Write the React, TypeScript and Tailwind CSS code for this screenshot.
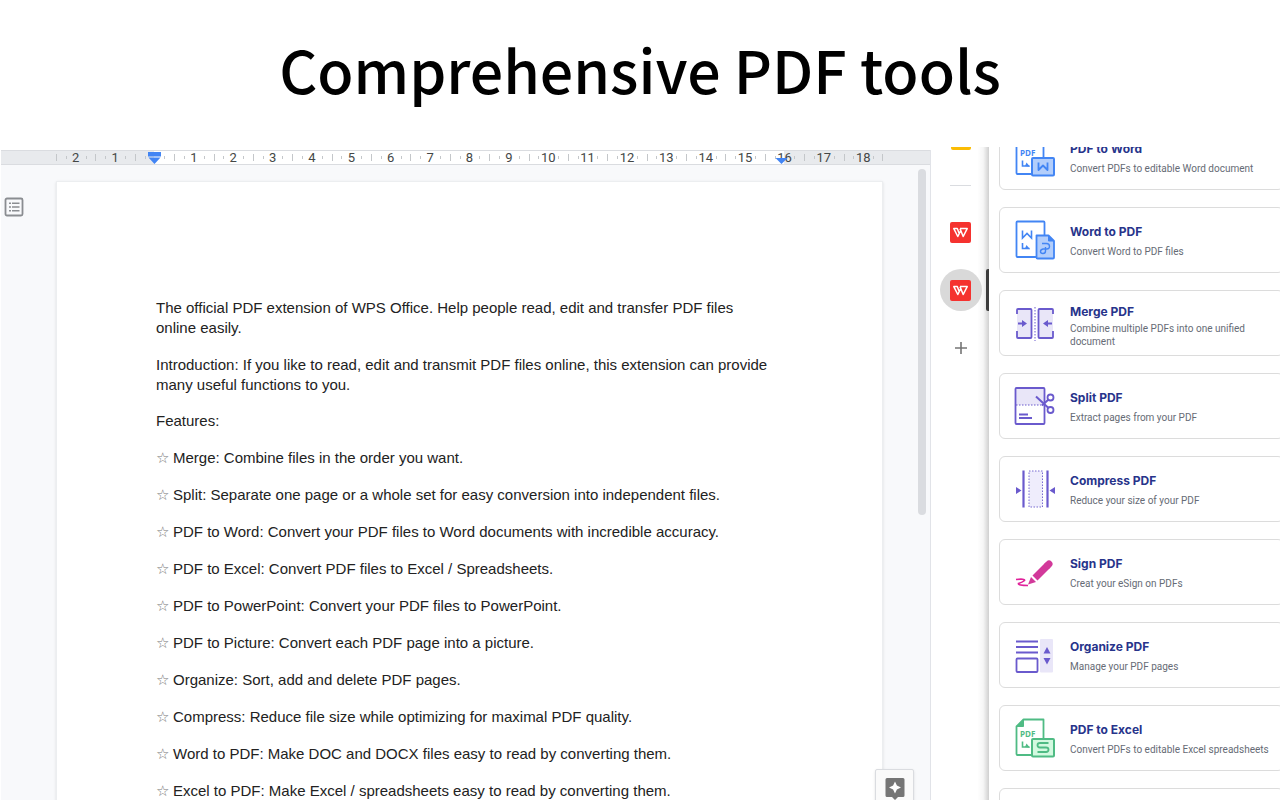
import type { ReactNode } from "react";

interface Tool {
  title: string;
  description: string;
  icon: ReactNode;
  twoLines?: boolean;
}

const BLUE = "#4285f4";
const PURPLE = "#6a5acd";
const GREEN = "#4fbb84";

// the bent corner mark printed on the page icons
function CornerMark({ x, y, color }: { x: number; y: number; color: string }) {
  return (
    <g>
      <path d={`M${x} ${y}V${y + 5.5}H${x + 7}`} fill="none" stroke={color} strokeWidth="1.6" />
      <path d={`M${x + 2.5} ${y + 5.5}L${x + 4} ${y + 2}L${x + 7.5} ${y + 6.3}Z`} fill={color} />
    </g>
  );
}

function PdfToIcon({ color, fill, letter }: { color: string; fill: string; letter: string }) {
  return (
    <svg viewBox="0 0 40 40" className="size-10" aria-hidden="true">
      <path d="M8.5 1.5H28.5V37H2.5Q1.5 37 1.5 36V8.5Z" fill="#fff" stroke={color} strokeWidth="1.8" strokeLinejoin="round" />
      <path d="M8.5 1.5V8.5H1.5Z" fill={color} stroke={color} strokeLinejoin="round" />
      <text x="5" y="19" fill={color} fontFamily="Open Sans, sans-serif" fontSize="8" fontWeight="700">
        PDF
      </text>
      <CornerMark x={7.5} y={23.5} color={color} />
      <rect x="17" y="21" width="22" height="17.5" rx="1" fill={fill} stroke={color} strokeWidth="2" />
      <path d={letter} fill="none" stroke={color} strokeWidth="1.8" strokeLinejoin="round" />
    </svg>
  );
}

function WordToPdfIcon() {
  return (
    <svg viewBox="0 0 40 40" className="size-10" aria-hidden="true">
      <rect x="1.5" y="1.5" width="28" height="35.5" rx="1" fill="#fff" stroke={BLUE} strokeWidth="1.8" />
      <path d="M7.5 10.5V18L12 13.5L16.5 18V10.5" fill="none" stroke={BLUE} strokeWidth="1.6" />
      <CornerMark x={7.5} y={23} color={BLUE} />
      <path d="M21.5 15.5H33.5L39 21V37.5Q39 38.5 38 38.5H22.5Q21.5 38.5 21.5 37.5Z" fill="#b3cefb" stroke={BLUE} strokeWidth="1.8" strokeLinejoin="round" />
      <path d="M33.5 15.5V21H39Z" fill={BLUE} stroke={BLUE} />
      <path d="M27 23.5H31.5Q34.5 23.5 34.5 26.3T31.5 29H28Q25.5 29.5 25.5 31.5T28 33.5Q30.5 33.5 30.5 31V27" fill="none" stroke={BLUE} strokeWidth="1.4" />
    </svg>
  );
}

function MergeIcon() {
  return (
    <svg viewBox="0 0 40 40" className="size-10" aria-hidden="true">
      <path d="M2 6H17V35H2ZM23 6H38V35H23Z" fill="#e9e6f8" />
      <path
        d="M2 11V7Q2 6 3 6H15.5Q16.5 6 16.5 7V34Q16.5 35 15.5 35H3Q2 35 2 34V28M38 11V7Q38 6 37 6H24.5Q23.5 6 23.5 7V34Q23.5 35 24.5 35H37Q38 35 38 34V28"
        fill="none"
        stroke={PURPLE}
        strokeWidth="1.8"
      />
      <path d="M20 4V38" stroke={PURPLE} strokeDasharray="1.5 1.5" />
      <path d="M3 20.5H8M37 20.5H32" stroke={PURPLE} strokeWidth="1.8" />
      <path d="M7 17V24L12 20.5ZM33 17V24L28 20.5Z" fill={PURPLE} />
    </svg>
  );
}

function SplitIcon() {
  return (
    <svg viewBox="0 0 40 40" className="size-10 overflow-visible" aria-hidden="true">
      <path d="M1 2H29V19H1Z" fill="#e9e6f8" />
      <rect x="0.5" y="2" width="29" height="36" rx="1" fill="none" stroke={PURPLE} strokeWidth="1.8" />
      <path d="M1 19H27" stroke={PURPLE} strokeDasharray="1.5 1.5" />
      <path d="M4 28.5H13M4 32H17" stroke={PURPLE} strokeWidth="1.8" />
      <path d="M21 10.5L33.5 22M33.5 13.5L27 19.5" stroke={PURPLE} strokeWidth="2" />
      <circle cx="35.5" cy="11.5" r="3" fill="none" stroke={PURPLE} strokeWidth="1.8" />
      <circle cx="35.5" cy="24" r="3" fill="none" stroke={PURPLE} strokeWidth="1.8" />
    </svg>
  );
}

function CompressIcon() {
  return (
    <svg viewBox="0 0 40 40" className="size-10" aria-hidden="true">
      <path d="M8.5 1.5V38.5M32.5 1.5V38.5" stroke={PURPLE} strokeWidth="2.2" />
      <rect x="14" y="2" width="13.5" height="36" fill="#efedfc" stroke={PURPLE} strokeWidth="0.9" strokeDasharray="1.5 1.5" />
      <path d="M1 18V25L6.5 21.5ZM40 18V25L34.5 21.5Z" fill={PURPLE} />
    </svg>
  );
}

function SignIcon() {
  return (
    <svg viewBox="0 0 40 40" className="size-10" aria-hidden="true">
      <path d="M20 26L33 13" stroke="#d2399a" strokeWidth="7" />
      <path d="M32.5 13.5L34 12" stroke="#d2399a" strokeWidth="7" strokeLinecap="round" />
      <path d="M16 25L21 30L13 32.5Z" fill="#d2399a" />
      <path d="M1 27.5Q10 26.5 9.5 28.5Q8 30 3.5 31.5Q3 33.5 13 33.5" fill="none" stroke="#e0219a" strokeWidth="1.7" />
    </svg>
  );
}

function OrganizeIcon() {
  return (
    <svg viewBox="0 0 40 40" className="size-10" aria-hidden="true">
      <path d="M1 6.5H23M1 12H23M1 17.5H23" stroke={PURPLE} strokeWidth="1.8" />
      <rect x="1.5" y="23.5" width="21" height="13.5" rx="1" fill="none" stroke={PURPLE} strokeWidth="1.8" />
      <rect x="25" y="4" width="13" height="33.5" rx="1" fill="#e9e6f8" />
      <path d="M32 12L35.5 18.5H28.5ZM32 29.5L35.5 23H28.5Z" fill={PURPLE} />
    </svg>
  );
}

const WORD_LETTER = "M23.5 25.5V33L28 28.5L32.5 33V25.5";
const EXCEL_LETTER = "M33.5 25H25Q22.5 25 22.5 27.2T25 29.5H31Q33.5 29.5 33.5 31.7T31 34H22.5";

const tools: Tool[] = [
  {
    title: "PDF to Word",
    description: "Convert PDFs to editable Word document",
    icon: <PdfToIcon color={BLUE} fill="#b3cefb" letter={WORD_LETTER} />,
  },
  { title: "Word to PDF", description: "Convert Word to PDF files", icon: <WordToPdfIcon /> },
  {
    title: "Merge PDF",
    description: "Combine multiple PDFs into one unified document",
    icon: <MergeIcon />,
    twoLines: true,
  },
  { title: "Split PDF", description: "Extract pages from your PDF", icon: <SplitIcon /> },
  { title: "Compress PDF", description: "Reduce your size of your PDF", icon: <CompressIcon /> },
  { title: "Sign PDF", description: "Creat your eSign on PDFs", icon: <SignIcon /> },
  { title: "Organize PDF", description: "Manage your PDF pages", icon: <OrganizeIcon /> },
  {
    title: "PDF to Excel",
    description: "Convert PDFs to editable Excel spreadsheets",
    icon: <PdfToIcon color={GREEN} fill="#d3f9e0" letter={EXCEL_LETTER} />,
  },
];

const features = [
  "Merge: Combine files in the order you want.",
  "Split: Separate one page or a whole set for easy conversion into independent files.",
  "PDF to Word: Convert your PDF files to Word documents with incredible accuracy.",
  "PDF to Excel: Convert PDF files to Excel / Spreadsheets.",
  "PDF to PowerPoint: Convert your PDF files to PowerPoint.",
  "PDF to Picture: Convert each PDF page into a picture.",
  "Organize: Sort, add and delete PDF pages.",
  "Compress: Reduce file size while optimizing for maximal PDF quality.",
  "Word to PDF: Make DOC and DOCX files easy to read by converting them.",
  "Excel to PDF: Make Excel / spreadsheets easy to read by converting them.",
];

// ruler runs from -2.5 to 18.5, one cell per centimetre
const rulerCells = Array.from({ length: 21 }, (_, i) => i - 2);

function Ruler() {
  return (
    <div className="flex h-[15px] border-y border-[#dadce0] bg-[#e8eaed] pr-[47px] pl-[55px]">
      {rulerCells.map((n) => (
        <div
          key={n}
          className={
            n > 0 && n < 16
              ? "relative flex flex-1 items-center justify-center bg-white"
              : "relative flex flex-1 items-center justify-center"
          }
        >
          {n === 0 && <span className="absolute inset-y-0 right-0 w-1/2 bg-white" />}
          {n === 16 && <span className="absolute inset-y-0 left-0 w-1/2 bg-white" />}
          <span className="absolute left-0 h-[7px] w-px bg-[#c4c7ca]" />
          <span className="absolute left-1/4 h-[3px] w-px bg-[#c4c7ca]" />
          <span className="absolute left-3/4 h-[3px] w-px bg-[#c4c7ca]" />
          {n === 18 && <span className="absolute right-0 h-[7px] w-px bg-[#c4c7ca]" />}
          {n !== 0 && <span className="relative text-[13px] leading-none text-[#444746]">{Math.abs(n)}</span>}
          {n === 0 && (
            <svg viewBox="0 0 13 13" className="relative size-[13px] shrink-0" aria-hidden="true">
              <path d="M0 1H13V5.5H0ZM0.500 6.5H12.5L6.5 13Z" fill="#4285f4" />
            </svg>
          )}
          {n === 16 && (
            <svg viewBox="0 0 13 12" className="absolute inset-x-2.5 top-px h-3 w-[13px]" aria-hidden="true">
              <path d="M0.5 6H12.5L6.5 12Z" fill="#4285f4" />
            </svg>
          )}
        </div>
      ))}
    </div>
  );
}

function DocumentPane() {
  return (
    <main className="relative mt-[3px] ml-px flex min-w-0 flex-1 flex-col overflow-hidden border-r border-[#e1e3e8] bg-[#f8f9fb] font-[Roboto,sans-serif]">
      <Ruler />
      <article className="mt-4 mr-[47px] ml-[55px] flex-1 border border-[#eceef0] bg-white pt-[116px] pr-[110px] pl-[99px] font-['Liberation_Sans',Arial,sans-serif] text-[15px] leading-5 text-[#222] shadow-sm">
        <p>
          The official PDF extension of WPS Office. Help people read, edit and transfer PDF files online easily.
        </p>
        <p className="mt-[17px]">
          Introduction: If you like to read, edit and transmit PDF files online, this extension can provide many
          useful functions to you.
        </p>
        <p className="mt-4">Features:</p>
        <ul className="mt-[17px] flex flex-col gap-[17px]">
          {features.map((feature) => (
            <li key={feature} className="flex gap-1 whitespace-nowrap">
              <span className="w-[13px] font-['DejaVu_Sans',sans-serif] text-[#777]">☆</span>
              {feature}
            </li>
          ))}
        </ul>
      </article>
      <button type="button" aria-label="Show outline" className="absolute top-[47px] left-[3px]">
        <svg viewBox="0 0 20 20" className="size-5" fill="none" aria-hidden="true">
          <rect x="1.5" y="1.5" width="17" height="17" rx="1.5" stroke="#8a8d91" strokeWidth="1.8" />
          <path d="M5 6.3H7M8 6.3H15.5M5 10H7M8 10H15.5M5 13.7H7M8 13.7H15.5" stroke="#8a8d91" strokeWidth="1.6" />
        </svg>
      </button>
      <div className="absolute top-[19px] right-1 h-[346px] w-2 rounded-full bg-[#dadce0]" />
      <button
        type="button"
        aria-label="Explore"
        className="absolute right-4 -bottom-2 flex h-[39px] w-[39px] justify-center rounded-xs border border-[#dadce0] bg-[#fafafa] pt-2 shadow"
      >
        <svg viewBox="0 0 20 24" className="h-6 w-5" aria-hidden="true">
          <path d="M2 0H18Q19.5 0 19.5 1.5V17.5Q19.5 19 18 19H13L10 22L7 19H2Q0.5 19 0.5 17.5V1.5Q0.5 0 2 0Z" fill="#757575" />
          <path d="M10 3.5L11.9 7.6L16 9.5L11.9 11.4L10 15.5L8.1 11.4L4 9.5L8.1 7.6Z" fill="#fff" />
        </svg>
      </button>
    </main>
  );
}

function WpsLogo() {
  return (
    <svg viewBox="0 0 21 21" className="size-[21px]" aria-hidden="true">
      <rect width="21" height="21" rx="2" fill="#f5322f" />
      <path
        d="M9 11L7.3 6.6H3.8L7.8 14.5L10.8 8.5M10 6.6H17.2L13.2 14.5L10 6.6"
        fill="none"
        stroke="#fff"
        strokeWidth="1.5"
        strokeLinejoin="round"
      />
    </svg>
  );
}

function AddonRail() {
  return (
    <nav className="relative flex w-[58px] shrink-0 flex-col items-center bg-linear-to-l from-[#d0d0d0] from-0% via-[#f6f6f6] via-10% to-white to-20% pl-px">
      <span className="h-[3px] w-5 rounded-b-xs bg-[#fbbc04]" />
      <span className="mt-[35px] h-px w-[21px] bg-[#dadce0]" />
      <button type="button" aria-label="WPS PDF" className="mt-[25px] flex size-[42px] items-center justify-center rounded-full">
        <WpsLogo />
      </button>
      <button type="button" aria-label="WPS PDF tools" className="mt-4 flex size-[42px] items-center justify-center rounded-full bg-[#d9d9d9]">
        <WpsLogo />
      </button>
      <button type="button" aria-label="Get add-ons" className="mt-4 flex size-[42px] items-center justify-center">
        <svg viewBox="0 0 14 14" className="size-3.5" aria-hidden="true">
          <path d="M7 1V13M1 7H13" stroke="#757575" strokeWidth="1.6" />
        </svg>
      </button>
      <span className="absolute top-[122px] right-0 h-[42px] w-[3px] rounded-l-xs bg-[#3c3c3c]" />
    </nav>
  );
}

function ToolCard({ tool }: { tool: Tool }) {
  return (
    <button
      type="button"
      className="flex h-[66px] w-full shrink-0 items-center gap-[15px] rounded-md border border-[#dcdcdc] bg-white pl-[15px] text-left"
    >
      <span className="shrink-0">{tool.icon}</span>
      <span className="flex flex-col pt-[3px]">
        <span className="text-xs leading-5 font-bold text-[#27348b]">{tool.title}</span>
        <span
          className={
            tool.twoLines
              ? "max-w-[205px] font-[Roboto,sans-serif] text-[10px] leading-[13px] text-[#666b75]"
              : "max-w-[205px] font-[Roboto,sans-serif] text-[10px] leading-5 text-[#666b75]"
          }
        >
          {tool.description}
        </span>
      </span>
    </button>
  );
}

function ToolPanel() {
  return (
    <aside className="w-[291px] shrink-0 overflow-hidden bg-white pl-[10px] font-[Inter,sans-serif]">
      <div className="-mt-[23px] -mr-1 flex flex-col gap-[17px]">
        {tools.map((tool) => (
          <ToolCard key={tool.title} tool={tool} />
        ))}
        <div className="h-[66px] shrink-0 rounded-md border border-[#dcdcdc]" />
      </div>
    </aside>
  );
}

export default function App() {
  return (
    <div className="flex h-screen flex-col overflow-hidden bg-white">
      <header className="flex h-[147px] shrink-0 items-center justify-center pb-2.5">
        <h1 className="font-['Noto_Sans_CJK_SC',sans-serif] text-[59px] leading-none font-medium text-black">
          Comprehensive PDF tools
        </h1>
      </header>
      <div className="flex min-h-0 flex-1">
        <DocumentPane />
        <AddonRail />
        <ToolPanel />
      </div>
    </div>
  );
}
